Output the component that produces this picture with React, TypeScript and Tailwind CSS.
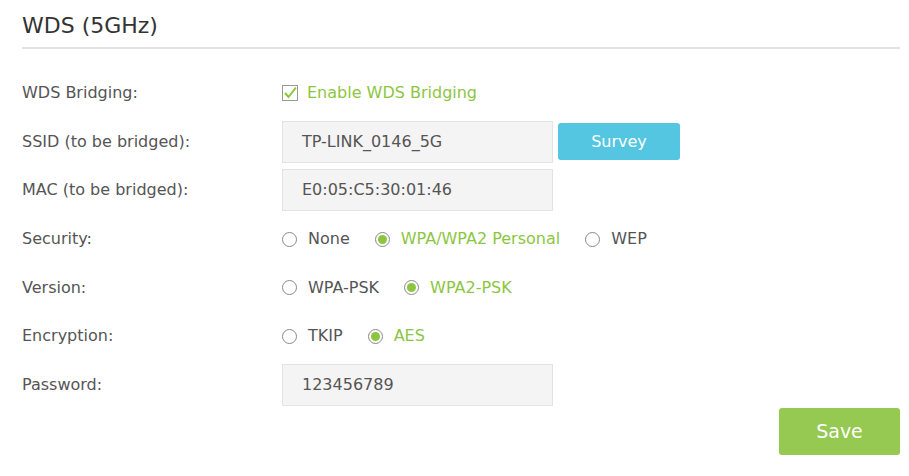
import React, { useState } from 'react';

const font = "font-['DejaVu_Sans','Liberation_Sans',sans-serif]";

const Radio: React.FC<{ checked: boolean; label: string; onClick: () => void }> = ({ checked, label, onClick }) => (
  <label className="flex items-center cursor-pointer" onClick={onClick}>
    <span className="w-[15px] h-[15px] rounded-full border border-[#8a8a8a] bg-white flex items-center justify-center shrink-0">
      {checked && <span className="w-[9px] h-[9px] rounded-full bg-[#8cc63f]"></span>}
    </span>
    <span className={`ml-[11px] ${checked ? 'text-[#8cc63f]' : 'text-[#555]'}`}>{label}</span>
  </label>
);

const Row: React.FC<{ label: string; children: React.ReactNode }> = ({ label, children }) => (
  <div className="flex items-center h-[48.6px]">
    <div className="w-[260px] text-[#555]">{label}</div>
    <div className="flex items-center">{children}</div>
  </div>
);

const Field: React.FC<{ value: string }> = ({ value }) => (
  <div className="w-[271px] h-[42px] bg-[#f4f4f4] border border-[#e3e3e3] flex items-center px-[19px] text-[#555]">
    {value}
  </div>
);

export default function App() {
  const [enabled, setEnabled] = useState(true);
  const [security, setSecurity] = useState('wpa');
  const [version, setVersion] = useState('wpa2');
  const [enc, setEnc] = useState('aes');

  return (
    <div className={`w-[909px] h-[476px] bg-white ${font} text-[16px] relative`}>
      <div className="pl-[22px] pr-[9px] pt-[12px]">
        <h2 className="text-[22px] text-[#333] leading-[28px] pb-[7px] border-b-2 border-[#e2e2e2]">WDS (5GHz)</h2>

        <div className="mt-[20px]">
          <Row label="WDS Bridging:">
            <label className="flex items-center cursor-pointer" onClick={() => setEnabled(!enabled)}>
              <span className="w-[16px] h-[16px] border border-[#999] bg-white flex items-center justify-center">
                {enabled && (
                  <svg width="14" height="14" viewBox="0 0 14 14">
                    <path d="M2 7 L5.5 11 L13 1.5" fill="none" stroke="#8cc63f" strokeWidth="2" />
                  </svg>
                )}
              </span>
              <span className="ml-[9px] text-[#8cc63f]">Enable WDS Bridging</span>
            </label>
          </Row>
          <Row label="SSID (to be bridged):">
            <Field value="TP-LINK_0146_5G" />
            <button className="ml-[5px] w-[122px] h-[37px] rounded-[3px] bg-[#54c6e1] text-white">Survey</button>
          </Row>
          <Row label="MAC (to be bridged):">
            <Field value="E0:05:C5:30:01:46" />
          </Row>
          <Row label="Security:">
            <div className="flex items-center gap-[25px]">
              <Radio checked={security === 'none'} label="None" onClick={() => setSecurity('none')} />
              <Radio checked={security === 'wpa'} label="WPA/WPA2 Personal" onClick={() => setSecurity('wpa')} />
              <Radio checked={security === 'wep'} label="WEP" onClick={() => setSecurity('wep')} />
            </div>
          </Row>
          <Row label="Version:">
            <div className="flex items-center gap-[25px]">
              <Radio checked={version === 'wpa'} label="WPA-PSK" onClick={() => setVersion('wpa')} />
              <Radio checked={version === 'wpa2'} label="WPA2-PSK" onClick={() => setVersion('wpa2')} />
            </div>
          </Row>
          <Row label="Encryption:">
            <div className="flex items-center gap-[25px]">
              <Radio checked={enc === 'tkip'} label="TKIP" onClick={() => setEnc('tkip')} />
              <Radio checked={enc === 'aes'} label="AES" onClick={() => setEnc('aes')} />
            </div>
          </Row>
          <Row label="Password:">
            <Field value="123456789" />
          </Row>
        </div>

        <div className="flex justify-end -mt-[1px]">
          <button className="w-[121px] h-[47px] rounded-[3px] bg-[#95c952] text-white text-[19px]">Save</button>
        </div>
      </div>
    </div>
  );
}
